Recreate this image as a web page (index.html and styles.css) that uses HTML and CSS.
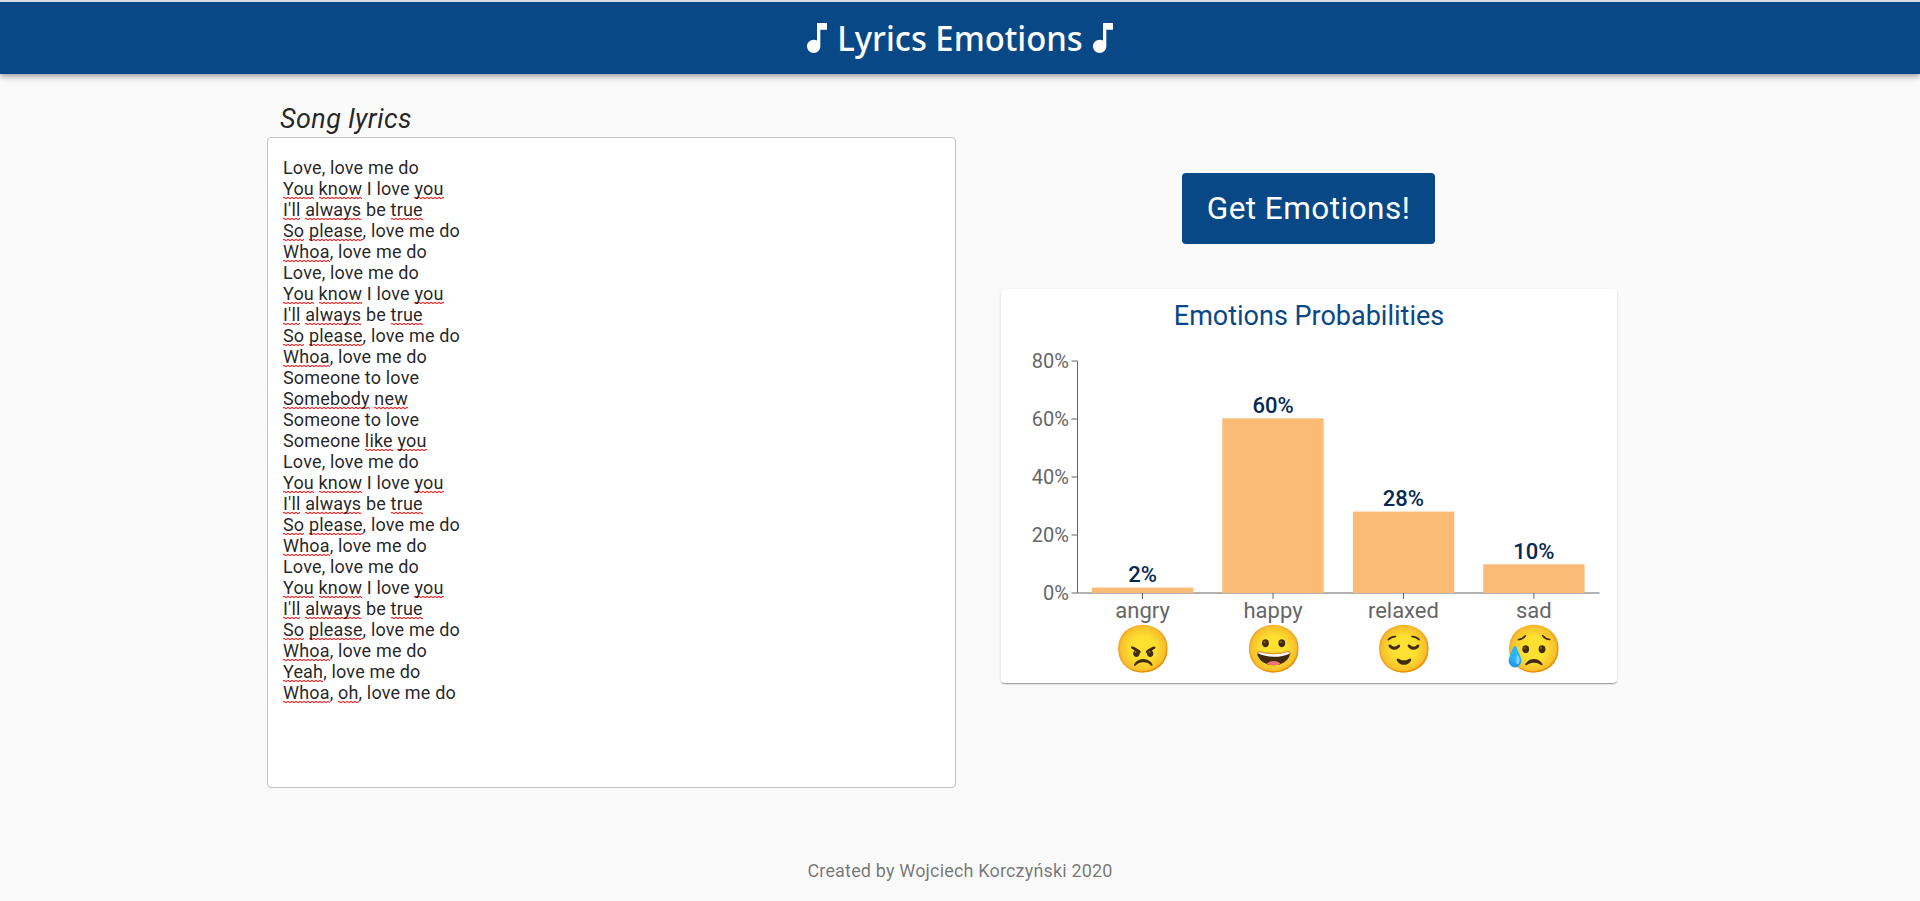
FILE: index.html
```html
<!DOCTYPE html>
<html lang="en">
<head>
<meta charset="utf-8">
<title>Lyrics Emotions</title>
<link rel="stylesheet" href="styles.css">
</head>
<body>
<header class="app-bar">
  <svg class="note" viewBox="0 0 24 24"><path d="M12 3v10.55c-.59-.34-1.27-.55-2-.55-2.21 0-4 1.79-4 4s1.79 4 4 4 4-1.79 4-4V7h4V3h-6z"/></svg>
  <h1 class="brand"><span class="brand-text">Lyrics Emotions</span></h1>
  <svg class="note" viewBox="0 0 24 24"><path d="M12 3v10.55c-.59-.34-1.27-.55-2-.55-2.21 0-4 1.79-4 4s1.79 4 4 4 4-1.79 4-4V7h4V3h-6z"/></svg>
</header>
<main class="content">
  <section class="lyrics">
    <div class="lyrics-label">Song lyrics</div>
    <div class="lyrics-field">
      <div>Love, love me do</div>
      <div><span class="sp">You</span> <span class="sp">know</span> I love <span class="sp">you</span></div>
      <div><span class="sp">I'll</span> <span class="sp">always</span> be <span class="sp">true</span></div>
      <div><span class="sp">So</span> <span class="sp">please</span>, love me do</div>
      <div><span class="sp">Whoa</span>, love me do</div>
      <div>Love, love me do</div>
      <div><span class="sp">You</span> <span class="sp">know</span> I love <span class="sp">you</span></div>
      <div><span class="sp">I'll</span> <span class="sp">always</span> be <span class="sp">true</span></div>
      <div><span class="sp">So</span> <span class="sp">please</span>, love me do</div>
      <div><span class="sp">Whoa</span>, love me do</div>
      <div>Someone to love</div>
      <div><span class="sp">Somebody</span> <span class="sp">new</span></div>
      <div>Someone to love</div>
      <div>Someone <span class="sp">like</span> <span class="sp">you</span></div>
      <div>Love, love me do</div>
      <div><span class="sp">You</span> <span class="sp">know</span> I love <span class="sp">you</span></div>
      <div><span class="sp">I'll</span> <span class="sp">always</span> be <span class="sp">true</span></div>
      <div><span class="sp">So</span> <span class="sp">please</span>, love me do</div>
      <div><span class="sp">Whoa</span>, love me do</div>
      <div>Love, love me do</div>
      <div><span class="sp">You</span> <span class="sp">know</span> I love <span class="sp">you</span></div>
      <div><span class="sp">I'll</span> <span class="sp">always</span> be <span class="sp">true</span></div>
      <div><span class="sp">So</span> <span class="sp">please</span>, love me do</div>
      <div><span class="sp">Whoa</span>, love me do</div>
      <div><span class="sp">Yeah</span>, love me do</div>
      <div><span class="sp">Whoa</span>, <span class="sp">oh</span>, love me do</div>
    </div>
  </section>
  <section class="results">
    <button class="action" type="button">Get Emotions!</button>
    <div class="card">
      <h2 class="card-title">Emotions Probabilities</h2>
      <svg class="chart" width="616" height="349" viewBox="0 0 616 349">
        <g class="axis">
          <path d="M76.5 27V259M77 259H598.5"/>
          <path d="M70.500 27H76.500M70.500 85H76.500M70.500 143H76.500M70.500 201H76.500M70.500 259H76.500"/>
          <path d="M141.500 259V265M272 259V265M402.500 259V265M532.900 259V265"/>
        </g>
        <g class="tick">
          <text x="68" y="34">80%</text>
          <text x="68" y="92">60%</text>
          <text x="68" y="150">40%</text>
          <text x="68" y="208">20%</text>
          <text x="68" y="266">0%</text>
        </g>
        <g class="bars">
          <rect x="91" y="253.600" width="101.300" height="5.400"/>
          <rect x="221.300" y="84.300" width="101.400" height="174.700"/>
          <rect x="352" y="177.600" width="101.300" height="81.400"/>
          <rect x="482.200" y="230.300" width="101.400" height="28.700"/>
        </g>
        <g class="value">
          <text x="141.600" y="247.500">2%</text>
          <text x="272" y="78.500">60%</text>
          <text x="402.400" y="171.500">28%</text>
          <text x="532.800" y="225">10%</text>
        </g>
        <g class="name">
          <text x="141.600" y="283.500">angry</text>
          <text x="272" y="283.500">happy</text>
          <text x="402.400" y="283.500">relaxed</text>
          <text x="532.800" y="283.500">sad</text>
        </g>
        <g class="face">
          <text x="142.500" y="330.500">😠</text>
          <text x="272.900" y="330.500">😀</text>
          <text x="403.300" y="330.500">😌</text>
          <text x="533.700" y="330.500">😥</text>
        </g>
      </svg>
    </div>
  </section>
</main>
<footer class="footer">Created by Wojciech Korczyński 2020</footer>
</body>
</html>
```
FILE: styles.css
```css
* { box-sizing: border-box; }
body {
  margin: 0;
  height: 901px;
  overflow: hidden;
  background: #fafafa;
  border-top: 2px solid #d9dbde;
  color: rgba(0, 0, 0, 0.87);
  font: 18px/21px Roboto, "Open Sans", sans-serif;
  letter-spacing: 0.00938em;
}
.app-bar {
  display: flex;
  align-items: center;
  justify-content: center;
  height: 72px;
  background: #084887;
  color: #fff;
  box-shadow: 0 2px 4px -1px rgba(0,0,0,.2), 0 4px 5px 0 rgba(0,0,0,.14), 0 1px 10px 0 rgba(0,0,0,.12);
}
.note { width: 40px; height: 40px; fill: currentColor; }
.brand {
  display: flex;
  justify-content: center;
  width: 245.4px;
  margin: 0;
  font: 500 35px/48px "Noto Sans", sans-serif;
  letter-spacing: 0;
  white-space: nowrap;
}
.brand-text { flex: none; transform: scaleX(0.937); }
.content {
  display: flex;
  gap: 45px;
  padding-left: 267px;
}
.lyrics { width: 689px; padding-top: 29px; }
.lyrics-label {
  padding-left: 13px;
  font-size: 27px;
  line-height: 32px;
  height: 34px;
  font-style: italic;
  letter-spacing: 0.4px;
}
.lyrics-field {
  height: 651px;
  padding: 19px 15px;
  border: 1px solid #c2c2c2;
  border-radius: 4px;
  background: #fff;
}
.sp {
  background-image:
    linear-gradient(90deg, #ff2a2a 0 2px, #ffc4c4 2px 4px),
    linear-gradient(90deg, #ffc4c4 0 2px, #ff2a2a 2px 4px);
  background-size: 4px 1px;
  background-repeat: repeat-x;
  background-position: 0 calc(100% - 1px), 0 100%;
}
.results {
  display: flex;
  flex-direction: column;
  align-items: center;
  width: 616px;
  padding-top: 99px;
}
.action {
  width: 253px;
  height: 71px;
  margin-right: 1px;
  padding: 8px 24px;
  border: 0;
  border-radius: 4px;
  background: #084887;
  color: #fff;
  font: 31.5px/55px Roboto, sans-serif;
  letter-spacing: 0.47px;
  white-space: nowrap;
}
.card {
  width: 616px;
  height: 394px;
  margin-top: 45px;
  padding-top: 9px;
  border-radius: 4px;
  background: #fff;
  box-shadow: 0 2px 1px -1px rgba(0,0,0,.2), 0 1px 1px 0 rgba(0,0,0,.14), 0 1px 3px 0 rgba(0,0,0,.12);
}
.card-title {
  margin: 0;
  color: #084887;
  font-size: 27px;
  font-weight: 400;
  line-height: 36px;
  letter-spacing: 0;
  text-align: center;
}
.chart { display: block; letter-spacing: 0; }
.axis path { fill: none; stroke: #666; }
.tick { fill: #666; font-size: 20px; text-anchor: end; }
.bars { fill: #fabb77; }
.value { fill: #042a54; font-size: 22px; font-weight: 500; text-anchor: middle; }
.name { fill: #666; font-size: 22px; text-anchor: middle; }
.face { font-size: 46.5px; font-family: "Noto Color Emoji", sans-serif; text-anchor: middle; }
.footer {
  margin-top: 72px;
  color: rgba(0, 0, 0, 0.54);
  text-align: center;
}
```
